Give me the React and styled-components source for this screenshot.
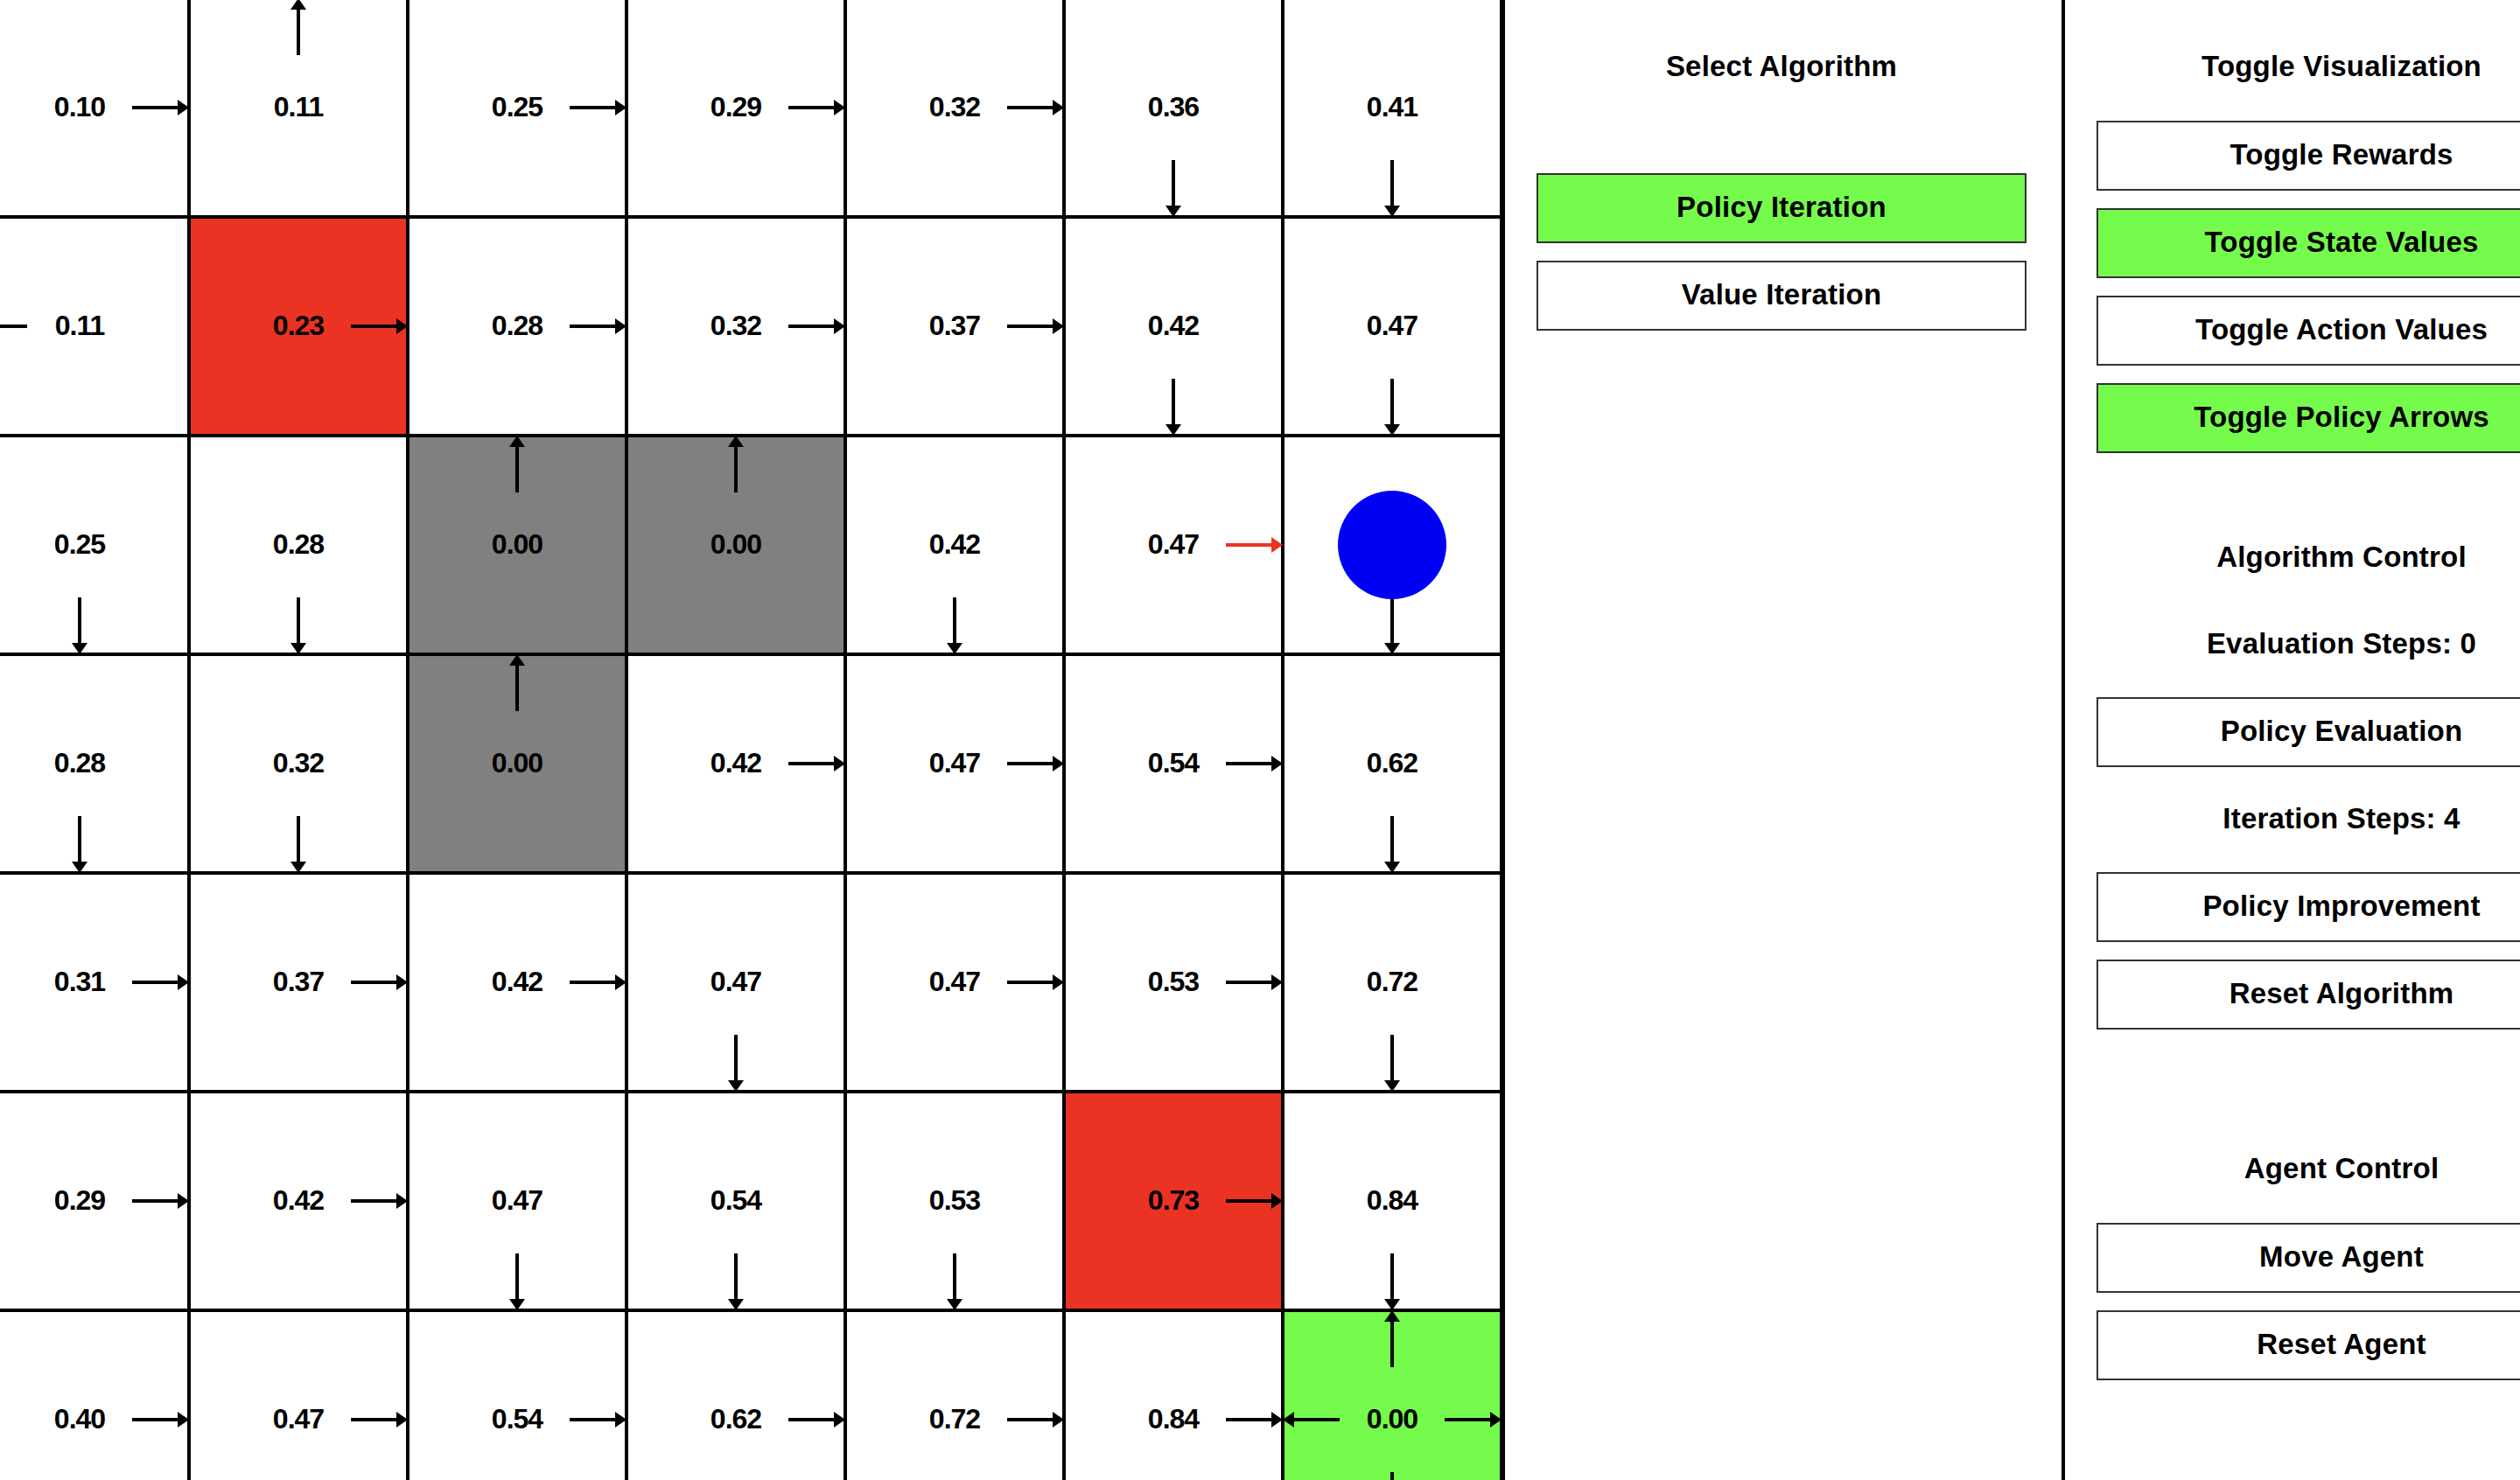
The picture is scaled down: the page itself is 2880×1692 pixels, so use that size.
import React from 'react';
import styled, { createGlobalStyle } from 'styled-components';

const GlobalStyle = createGlobalStyle`
  html, body {
    margin: 0;
    padding: 0;
    background: #ffffff;
    overflow: hidden;
  }
  body {
    font-family: "Liberation Sans", Arial, Helvetica, sans-serif;
    color: #000;
  }
`;

const fills = {
  empty: '#ffffff',
  trap: '#ea3323',
  wall: '#808080',
  goal: '#75fb4c',
};

// value, policy arrows (u d l r), cell kind, red arrow
const BOARD = [
  [['0.10', 'r'], ['0.11', 'u'], ['0.25', 'r'], ['0.29', 'r'], ['0.32', 'r'], ['0.36', 'd'], ['0.41', 'd']],
  [['0.11', 'l'], ['0.23', 'r', 'trap'], ['0.28', 'r'], ['0.32', 'r'], ['0.37', 'r'], ['0.42', 'd'], ['0.47', 'd']],
  [['0.25', 'd'], ['0.28', 'd'], ['0.00', 'u', 'wall'], ['0.00', 'u', 'wall'], ['0.42', 'd'], ['0.47', 'r', 'empty', true], [null, 'd', 'agent']],
  [['0.28', 'd'], ['0.32', 'd'], ['0.00', 'u', 'wall'], ['0.42', 'r'], ['0.47', 'r'], ['0.54', 'r'], ['0.62', 'd']],
  [['0.31', 'r'], ['0.37', 'r'], ['0.42', 'r'], ['0.47', 'd'], ['0.47', 'r'], ['0.53', 'r'], ['0.72', 'd']],
  [['0.29', 'r'], ['0.42', 'r'], ['0.47', 'd'], ['0.54', 'd'], ['0.53', 'd'], ['0.73', 'r', 'trap'], ['0.84', 'd']],
  [['0.40', 'r'], ['0.47', 'r'], ['0.54', 'r'], ['0.62', 'r'], ['0.72', 'r'], ['0.84', 'r'], ['0.00', 'udlr', 'goal']],
];

const Screen = styled.div`
  display: flex;
  align-items: flex-start;
  margin: -2px 0 0 -34px;
  height: 1694px;
  overflow: hidden;
`;

const Board = styled.div`
  flex: none;
  display: grid;
  grid-template-columns: repeat(7, 250px);
  grid-template-rows: repeat(7, 250px);
`;

const Cell = styled.div`
  position: relative;
  box-sizing: border-box;
  border: 2px solid #000;
  padding-bottom: 2px;
  background: ${(p) => fills[p.$kind] || '#ffffff'};
  display: flex;
  align-items: center;
  justify-content: center;
`;

const Value = styled.span`
  font-size: 32px;
  font-weight: 700;
  letter-spacing: -1px;
  color: #000;
`;

const Overlay = styled.svg`
  position: absolute;
  left: -2px;
  top: -2px;
  width: 250px;
  height: 250px;
  overflow: visible;
  z-index: 1;
  pointer-events: none;
`;

const Panel = styled.div`
  flex: none;
  box-sizing: border-box;
  width: ${(p) => p.$width}px;
  height: 1694px;
  border-left: 4px solid #000;
  padding-left: 36px;
  display: flex;
  flex-direction: column;
`;

const Label = styled.div`
  flex: none;
  box-sizing: border-box;
  width: 560px;
  height: 40px;
  line-height: 40px;
  margin-top: ${(p) => p.$gap}px;
  text-align: center;
  font-size: 33px;
  font-weight: 700;
  letter-spacing: 0.2px;
  white-space: nowrap;
`;

const Button = styled.button`
  flex: none;
  box-sizing: border-box;
  width: 560px;
  height: 80px;
  margin: ${(p) => p.$gap}px 0 0 0;
  padding: 0 0 2px 0;
  border: 2px solid #333;
  border-radius: 0;
  background: ${(p) => (p.$on ? '#75fb4c' : '#ffffff')};
  color: #000;
  font-family: inherit;
  font-size: 33px;
  font-weight: 700;
  letter-spacing: 0.2px;
  white-space: nowrap;
  cursor: pointer;
`;

const ROT = { r: 0, d: 90, l: 180, u: 270 };

function Arrow({ dir, color }) {
  return (
    <g transform={`rotate(${ROT[dir]} 125 125)`}>
      <line x1="185" y1="125" x2="240" y2="125" stroke={color} strokeWidth="4" />
      <polygon points="250,125 237,116 237,134" fill={color} />
    </g>
  );
}

function GridCell({ value, arrows, kind = 'empty', hot }) {
  return (
    <Cell $kind={kind}>
      {value && <Value>{value}</Value>}
      <Overlay viewBox="0 0 250 250">
        {arrows.split('').map((d) => (
          <Arrow key={d} dir={d} color={hot ? '#ea3323' : '#000'} />
        ))}
        {kind === 'agent' && <circle cx="125" cy="125" r="62" fill="#0000f5" />}
      </Overlay>
    </Cell>
  );
}

export default function App() {
  return (
    <>
      <GlobalStyle />
      <Screen>
        <Board>
          {BOARD.map((row, r) =>
            row.map(([value, arrows, kind, hot], c) => (
              <GridCell key={`${r}-${c}`} value={value} arrows={arrows} kind={kind} hot={hot} />
            ))
          )}
        </Board>

        <Panel $width={640}>
          <Label $gap={58}>Select Algorithm</Label>
          <Button $gap={102} $on>Policy Iteration</Button>
          <Button $gap={20}>Value Iteration</Button>
        </Panel>

        <Panel $width={642}>
          <Label $gap={58}>Toggle Visualization</Label>
          <Button $gap={42}>Toggle Rewards</Button>
          <Button $gap={20} $on>Toggle State Values</Button>
          <Button $gap={20}>Toggle Action Values</Button>
          <Button $gap={20} $on>Toggle Policy Arrows</Button>

          <Label $gap={99}>Algorithm Control</Label>
          <Label $gap={59}>Evaluation Steps: 0</Label>
          <Button $gap={41}>Policy Evaluation</Button>
          <Label $gap={39}>Iteration Steps: 4</Label>
          <Button $gap={41}>Policy Improvement</Button>
          <Button $gap={20}>Reset Algorithm</Button>

          <Label $gap={139}>Agent Control</Label>
          <Button $gap={42}>Move Agent</Button>
          <Button $gap={20}>Reset Agent</Button>
        </Panel>
      </Screen>
    </>
  );
}
